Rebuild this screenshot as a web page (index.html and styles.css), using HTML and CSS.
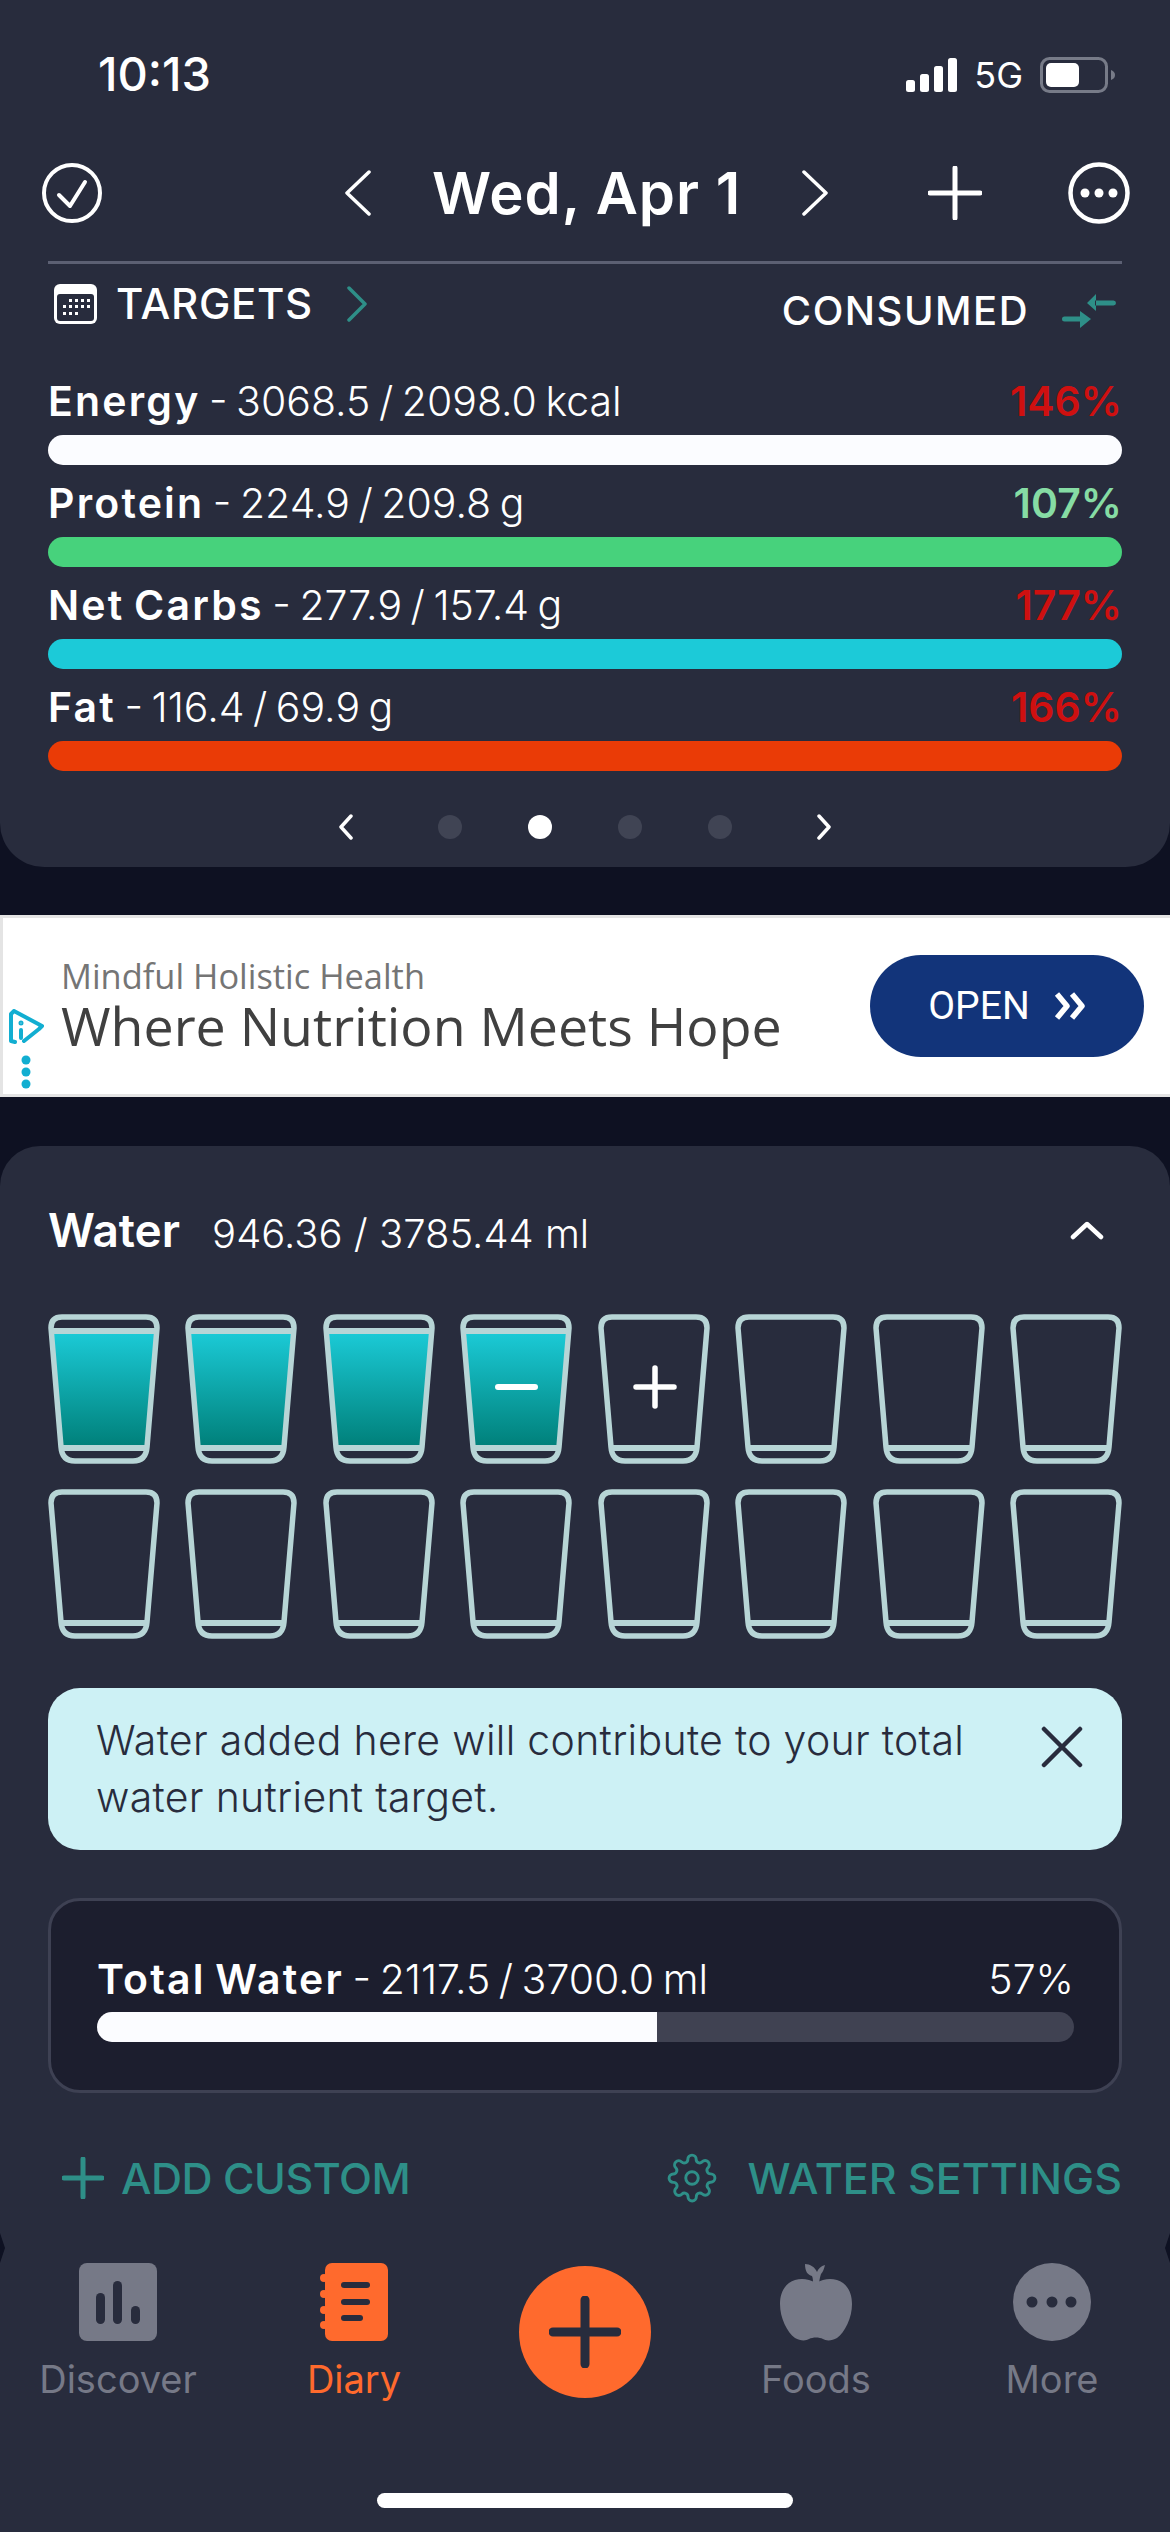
FILE: index.html
```html
<!DOCTYPE html>
<html lang="en">
<head>
    <meta charset="UTF-8">
    <meta name="viewport" content="width=device-width, initial-scale=1.0">
    <title>Diary - Water</title>
    <link rel="stylesheet" href="styles.css">
</head>
<body>
<div class="page">

    <section class="summary">
        <div class="status">
            <span class="time">10:13</span>
            <div class="status-right">
                <svg class="signal" width="51" height="34" viewBox="0 0 51 34" fill="#fff"><rect x="0" y="22" width="9" height="12" rx="2.5"/><rect x="14" y="16" width="9" height="18" rx="2.5"/><rect x="28" y="8" width="9" height="26" rx="2.5"/><rect x="42" y="0" width="9" height="34" rx="2.5"/></svg>
                <span class="net">5G</span>
                <svg class="battery" width="75" height="36" viewBox="0 0 75 36"><rect x="1.5" y="1.5" width="65" height="33" rx="8" fill="none" stroke="#777b88" stroke-width="3"/><rect x="6" y="6" width="33" height="24" rx="5" fill="#fff"/><path d="M71 13c3 1 4 3 4 5s-1 4-4 5z" fill="#777b88"/></svg>
            </div>
        </div>

        <div class="datebar">
            <svg class="ic-check" width="60" height="60" viewBox="0 0 60 60" fill="none" stroke="#fff" stroke-width="4" stroke-linecap="round" stroke-linejoin="round"><circle cx="30" cy="30" r="28"/><path d="M17 32l11 11 15-24"/></svg>
            <div class="datenav">
                <svg width="28" height="46" viewBox="0 0 28 46" fill="none" stroke="#fff" stroke-width="3.5" stroke-linecap="round" stroke-linejoin="round"><path d="M25 2L3 23l22 21"/></svg>
                <h1 class="date">Wed, Apr 1</h1>
                <svg width="28" height="46" viewBox="0 0 28 46" fill="none" stroke="#fff" stroke-width="3.5" stroke-linecap="round" stroke-linejoin="round"><path d="M3 2l22 21L3 44"/></svg>
            </div>
            <svg class="ic-plus" width="54" height="54" viewBox="0 0 54 54" fill="none" stroke="#fff" stroke-width="5" stroke-linecap="round"><path d="M27 2v50M2 27h50"/></svg>
            <svg class="ic-more" width="62" height="62" viewBox="0 0 62 62"><circle cx="31" cy="31" r="28.5" fill="none" stroke="#fff" stroke-width="4.5"/><circle cx="17" cy="31" r="4.5" fill="#fff"/><circle cx="31" cy="31" r="4.5" fill="#fff"/><circle cx="45" cy="31" r="4.5" fill="#fff"/></svg>
        </div>

        <div class="rule"></div>

        <div class="targets">
            <div class="targets-left">
                <svg width="43" height="40" viewBox="0 0 43 40"><rect width="43" height="40" rx="6" fill="#fff"/><rect x="3" y="10" width="37" height="27" rx="3" fill="#282c3d"/><g fill="#fff"><rect x="15" y="15" width="3" height="3"/><rect x="21" y="15" width="3" height="3"/><rect x="27" y="15" width="3" height="3"/><rect x="33" y="15" width="3" height="3"/><rect x="9" y="21" width="3" height="3"/><rect x="15" y="21" width="3" height="3"/><rect x="21" y="21" width="3" height="3"/><rect x="27" y="21" width="3" height="3"/><rect x="33" y="21" width="3" height="3"/><rect x="9" y="28" width="3" height="3"/><rect x="15" y="28" width="3" height="3"/><rect x="21" y="28" width="3" height="3"/></g></svg>
                <span>TARGETS</span>
                <svg class="teal-chev" width="22" height="36" viewBox="0 0 22 36" fill="none" stroke="#2e8f88" stroke-width="3.5" stroke-linecap="round" stroke-linejoin="round"><path d="M3 2l16 16L3 34"/></svg>
            </div>
            <div class="targets-right">
                <span>CONSUMED</span>
                <svg width="54" height="34" viewBox="0 0 54 34" fill="#2e8f88"><path d="M34 0L25 9l9 8zM0 25a2.500 2.500 0 0 1 2.500-2.500H20v5H2.500A2.500 2.500 0 0 1 0 25zM33 6.500h18.500a2.500 2.500 0 0 1 0 5H33zM18 17l11 8-11 9z"/></svg>
            </div>
        </div>

        <div class="macro">
            <div class="macro-head"><span><b>Energy</b> - 3068.5 / 2098.0 kcal</span><span class="pct over">146%</span></div>
            <div class="bar bar-white"></div>
        </div>
        <div class="macro">
            <div class="macro-head"><span><b>Protein</b> - 224.9 / 209.8 g</span><span class="pct ok">107%</span></div>
            <div class="bar bar-green"></div>
        </div>
        <div class="macro">
            <div class="macro-head"><span><b>Net Carbs</b> - 277.9 / 157.4 g</span><span class="pct over">177%</span></div>
            <div class="bar bar-cyan"></div>
        </div>
        <div class="macro">
            <div class="macro-head"><span><b>Fat</b> - 116.4 / 69.9 g</span><span class="pct over">166%</span></div>
            <div class="bar bar-red"></div>
        </div>

        <div class="pager">
            <svg width="16" height="26" viewBox="0 0 16 26" fill="none" stroke="#fff" stroke-width="3.5" stroke-linecap="round" stroke-linejoin="round"><path d="M13 2L3 13l10 11"/></svg>
            <div class="dots"><i></i><i class="on"></i><i></i><i></i></div>
            <svg width="16" height="26" viewBox="0 0 16 26" fill="none" stroke="#fff" stroke-width="3.5" stroke-linecap="round" stroke-linejoin="round"><path d="M3 2l10 11L3 24"/></svg>
        </div>
    </section>

    <section class="ad">
        <div class="ad-mark">
            <svg width="36" height="36" viewBox="0 0 36 36" fill="none" stroke="#12aed1" stroke-width="4" stroke-linecap="round" stroke-linejoin="round"><path d="M7 33L3 32V5l3-3 28 15-3 3-15 12"/><path d="M13 21v8"/><circle cx="13" cy="14" r="1" stroke-width="3"/></svg>
            <svg class="ad-dots" width="10" height="34" viewBox="0 0 10 34" fill="#12aed1"><circle cx="5" cy="5" r="4.500"/><circle cx="5" cy="17" r="4.500"/><circle cx="5" cy="29" r="4.500"/></svg>
        </div>
        <div class="ad-text">
            <div class="ad-small">Mindful Holistic Health</div>
            <div class="ad-big">Where Nutrition Meets Hope</div>
        </div>
        <div class="ad-btn">OPEN
            <svg width="32" height="28" viewBox="0 0 32 28" fill="none" stroke="#fff" stroke-width="5.500" stroke-linejoin="round"><path d="M3 2l10 12L3 26M18 2l10 12-10 12"/></svg>
        </div>
    </section>

    <section class="water">
        <div class="water-head">
            <span class="water-title">Water</span>
            <span class="water-amt">946.36 / 3785.44 ml</span>
            <svg class="water-up" width="34" height="20" viewBox="0 0 34 20" fill="none" stroke="#fff" stroke-width="4.500" stroke-linecap="round" stroke-linejoin="round"><path d="M3 17L17 4l14 13"/></svg>
        </div>

        <div class="cups" id="cups"></div>

        <div class="note">
            <p>Water added here will contribute to your total water nutrient target.</p>
            <svg width="42" height="42" viewBox="0 0 42 42" fill="none" stroke="#282c3d" stroke-width="4.500" stroke-linecap="round"><path d="M3 3l36 36M39 3L3 39"/></svg>
        </div>

        <div class="total">
            <div class="macro-head"><span><b>Total Water</b> - 2117.5 / 3700.0 ml</span><span class="pct">57%</span></div>
            <div class="bar bar-track"><div class="bar-fill" style="width:57.3%"></div></div>
        </div>

        <div class="actions">
            <div class="action">
                <svg width="42" height="42" viewBox="0 0 42 42" fill="none" stroke="#2e8f88" stroke-width="5" stroke-linecap="round"><path d="M21 2v38M2 21h38"/></svg>
                <span>ADD CUSTOM</span>
            </div>
            <div class="action">
                <svg width="50" height="50" viewBox="0 0 24 24" fill="none" stroke="#2e8f88" stroke-width="1.400" stroke-linecap="round" stroke-linejoin="round"><circle cx="12" cy="12" r="3"/><path d="M19.400 15a1.650 1.650 0 0 0 .33 1.820l.06.06a2 2 0 1 1-2.830 2.830l-.06-.06a1.650 1.650 0 0 0-1.820-.33 1.650 1.650 0 0 0-1 1.510V21a2 2 0 0 1-4 0v-.09A1.650 1.650 0 0 0 9 19.400a1.650 1.650 0 0 0-1.820.33l-.06.06a2 2 0 1 1-2.830-2.830l.06-.06a1.650 1.650 0 0 0 .33-1.820 1.650 1.650 0 0 0-1.510-1H3a2 2 0 0 1 0-4h.09A1.650 1.650 0 0 0 4.600 9a1.650 1.650 0 0 0-.33-1.820l-.06-.06a2 2 0 1 1 2.830-2.830l.06.06a1.650 1.650 0 0 0 1.820.33H9a1.650 1.650 0 0 0 1-1.510V3a2 2 0 0 1 4 0v.09a1.650 1.650 0 0 0 1 1.510 1.650 1.650 0 0 0 1.820-.33l.06-.06a2 2 0 1 1 2.830 2.830l-.06.06a1.650 1.650 0 0 0-.33 1.820V9a1.650 1.650 0 0 0 1.510 1H21a2 2 0 0 1 0 4h-.09a1.650 1.650 0 0 0-1.510 1z"/></svg>
                <span>WATER SETTINGS</span>
            </div>
        </div>
    </section>

    <nav class="tabs">
        <div class="tab">
            <svg width="78" height="78" viewBox="0 0 78 78"><rect width="78" height="78" rx="8" fill="#767987"/><g fill="#282c3d"><rect x="17" y="30" width="9" height="31" rx="4.500"/><rect x="34" y="18" width="9" height="43" rx="4.500"/><rect x="52" y="43" width="9" height="18" rx="4.500"/></g></svg>
            <span>Discover</span>
        </div>
        <div class="tab tab-on">
            <svg width="68" height="78" viewBox="0 0 68 78"><rect x="5" width="63" height="78" rx="7" fill="#ff6a2d"/><g fill="#ff6a2d"><circle cx="4" cy="15" r="4"/><circle cx="4" cy="31" r="4"/><circle cx="4" cy="47" r="4"/><circle cx="4" cy="62" r="4"/></g><g fill="#282c3d"><rect x="21" y="19" width="29" height="6" rx="3"/><rect x="21" y="36" width="29" height="6" rx="3"/><rect x="21" y="52" width="22" height="6" rx="3"/></g></svg>
            <span>Diary</span>
        </div>
        <div class="fab">
            <svg width="72" height="72" viewBox="0 0 72 72" fill="none" stroke="#282c3d" stroke-width="9" stroke-linecap="round"><path d="M36 4v64M4 36h64"/></svg>
        </div>
        <div class="tab">
            <svg width="72" height="78" viewBox="0 0 72 78"><path fill="#767987" d="M36 20c7-4 14-5 21-3 9 3 15 11 15 24 0 14-7 28-15 34-5 3-11 3-14 1-4-2-10-2-14 0-3 2-9 2-14-1C7 69 0 55 0 41c0-13 6-21 15-24 7-2 14-1 21 3z"/><path fill="#767987" d="M33 22c0-4 0-7-1-9-4-1-7-4-7-12 5 0 10 3 12 8 1-3 4-6 8-7-1 4-2 7-4 9-1 3-2 7-2 11z"/></svg>
            <span>Foods</span>
        </div>
        <div class="tab">
            <svg width="78" height="78" viewBox="0 0 78 78"><circle cx="39" cy="39" r="39" fill="#767987"/><g fill="#282c3d"><circle cx="19" cy="39" r="5.500"/><circle cx="39" cy="39" r="5.500"/><circle cx="58" cy="39" r="5.500"/></g></svg>
            <span>More</span>
        </div>
    </nav>

    <div class="home-wrap"><div class="home"></div></div>
</div>

<script>
    // 16 glasses, first 4 filled
    const cups = document.getElementById("cups");
    const line = "#b7d5d6";
    for (let i = 0; i < 16; i++) {
        const full = i < 4;
        let mark = "";
        if (i === 3) mark = '<path d="M38 73h37" stroke="#fff" stroke-width="6" stroke-linecap="round"/>';
        if (i === 4) mark = '<path d="M38 73h38M57 54v38" stroke="#fff" stroke-width="5.5" stroke-linecap="round"/>';
        const water = full ? '<path d="M5 19h102l-7 113H12z" fill="url(#w' + i + ')"/>' : "";
        const top = full ? '<path d="M4 17h104" stroke="' + line + '" stroke-width="6"/>' : "";
        cups.innerHTML += '<svg class="cup" width="112" height="150" viewBox="0 0 112 150" fill="none">' +
            '<defs><linearGradient id="w' + i + '" x1="0" y1="0" x2="0" y2="1"><stop offset="0" stop-color="#1bcad6"/><stop offset="1" stop-color="#00807a"/></linearGradient></defs>' +
            water + top +
            '<path d="M14 3h84q11 0 11 11l-10 119q-1 14-14 14H27q-13 0-14-14L3 14Q3 3 14 3z" stroke="' + line + '" stroke-width="5.5"/>' +
            '<path d="M13 134h86" stroke="' + line + '" stroke-width="6"/>' + mark + '</svg>';
    }
</script>
</body>
</html>
```

FILE: styles.css
```css
* {
    box-sizing: border-box;
}

body {
    margin: 0;
    background: #0e1122;
    color: #fff;
    font-family: "Inter", "Liberation Sans", sans-serif;
}

.page {
    width: 1170px;
    height: 2532px;
    overflow: hidden;
}

/* top card */
.summary {
    height: 867px;
    padding: 0 48px;
    background: #282c3d;
    border-radius: 0 0 44px 44px;
}

.status {
    height: 146px;
    padding: 57px 0 0 50px;
    display: flex;
    justify-content: space-between;
    align-items: flex-start;
}

.time {
    font-size: 47px;
    font-weight: 500;
    line-height: 34px;
}

.status-right {
    display: flex;
    align-items: center;
    gap: 17px;
    margin-right: 7px;
}

.net {
    font-size: 36px;
    font-weight: 400;
    line-height: 34px;
}

.datebar {
    height: 94px;
    display: flex;
    align-items: center;
    margin: 0 -6px;
}

.datebar svg {
    flex: none;
}

.datenav {
    display: flex;
    flex: none;
    align-items: center;
    gap: 60px;
    margin-left: 242px;
}

.date {
    margin: 0;
    font-size: 58px;
    font-weight: 600;
    letter-spacing: 1px;
    white-space: nowrap;
}

.ic-plus {
    margin-left: 99px;
}

.ic-more {
    margin-left: 86px;
}

.rule {
    height: 3px;
    margin-top: 21px;
    background: #5c6073;
}

.targets {
    height: 99px;
    padding-top: 20px;
    display: flex;
    justify-content: space-between;
    align-items: flex-start;
    font-weight: 500;
    line-height: 40px;
}

.targets-left {
    display: flex;
    align-items: center;
    gap: 19px;
    margin-left: 6px;
    font-size: 42px;
    letter-spacing: .7px;
}

.teal-chev {
    margin-left: 14px;
}

.targets-right {
    display: flex;
    align-items: center;
    gap: 33px;
    margin: 7px 6px 0 0;
    font-size: 40px;
    letter-spacing: 1.5px;
}

.macro {
    height: 102px;
}

.macro-head {
    display: flex;
    justify-content: space-between;
    align-items: flex-end;
    height: 72px;
    padding-bottom: 4px;
    font-size: 41px;
    font-weight: 300;
    line-height: 60px;
    word-spacing: -3px;
}

.macro-head b {
    font-weight: 600;
    letter-spacing: 2.2px;
}

.pct {
    font-weight: 300;
}

.pct.over {
    color: #cf1010;
    font-weight: 600;
}

.pct.ok {
    color: #86dca4;
    font-weight: 600;
}

.bar {
    height: 30px;
    border-radius: 15px;
}

.bar-white {
    background: #fbfcff;
}

.bar-green {
    background: #47d27c;
}

.bar-cyan {
    background: #1ccad8;
}

.bar-red {
    background: #ea3b06;
}

.pager {
    display: flex;
    justify-content: center;
    align-items: center;
    gap: 84px;
    margin-top: 43px;
}

.dots {
    display: flex;
    gap: 66px;
}

.dots i {
    width: 24px;
    height: 24px;
    border-radius: 50%;
    background: #404454;
}

.dots i.on {
    background: #fff;
}

/* ad */
.ad {
    height: 182px;
    margin-top: 48px;
    background: #fff;
    border: 3px solid #e4e4e4;
    border-width: 3px 0 3px 3px;
    display: flex;
    align-items: center;
}

.ad-mark {
    width: 58px;
    padding-left: 5px;
    display: flex;
    flex-direction: column;
    align-items: flex-start;
    gap: 10px;
    margin-top: 86px;
    flex: none;
}

.ad-dots {
    margin-left: 13px;
}

.ad-text {
    flex: 1;
    font-family: "Open Sans", sans-serif;
}

.ad-small {
    font-size: 34.400px;
    color: #757575;
    line-height: 40px;
}

.ad-big {
    font-size: 53.700px;
    color: #404040;
    line-height: 60px;
}

.ad-btn {
    width: 274px;
    height: 102px;
    margin-right: 26px;
    border-radius: 51px;
    background: #12347a;
    color: #fff;
    font-family: "Roboto", sans-serif;
    font-size: 39px;
    display: flex;
    justify-content: center;
    align-items: center;
    gap: 24px;
}

/* water card */
.water {
    height: 1082px;
    margin-top: 49px;
    padding: 0 48px;
    background: #282c3d;
    border-radius: 40px 40px 0 0;
}

.water-head {
    height: 168px;
    display: flex;
    align-items: center;
}

.water-title {
    font-size: 46px;
    font-weight: 600;
}

.water-amt {
    margin-left: 32px;
    font-size: 40px;
    font-weight: 300;
    margin-top: 6px;
}

.water-up {
    margin-left: auto;
    margin-right: 18px;
}

.cups {
    display: grid;
    grid-template-columns: repeat(8, 112px);
    justify-content: space-between;
    row-gap: 25px;
}

.cup {
    display: block;
}

.note {
    height: 162px;
    margin-top: 49px;
    padding: 0 39px 0 48px;
    background: #cdf1f5;
    border-radius: 32px;
    display: flex;
    align-items: center;
    justify-content: space-between;
    color: #282c3d;
    font-size: 41px;
    font-weight: 300;
    line-height: 57px;
    letter-spacing: .3px;
}

.note p {
    margin: 0;
    width: 900px;
}

.note svg {
    margin-top: -44px;
}

.total {
    height: 195px;
    margin-top: 48px;
    padding: 40px 45px 0 46px;
    background: #1c1e2e;
    border: 3px solid #3e4153;
    border-radius: 32px;
}

.bar-track {
    background: #404252;
    overflow: hidden;
    margin-top: -1px;
}

.bar-fill {
    height: 100%;
    background: #fbfcff;
}

.actions {
    display: flex;
    justify-content: space-between;
    align-items: center;
    height: 72px;
    margin-top: 49px;
    padding-left: 14px;
    color: #2e8f88;
    font-size: 43px;
    font-weight: 500;
}

.action {
    display: flex;
    align-items: center;
    gap: 17px;
}

.action:first-child span {
    letter-spacing: -.5px;
}

.action:last-child {
    gap: 30px;
}

/* bottom tabs */
.tabs {
    height: 198px;
    margin-top: -1px;
    background: #282c3d;
    display: grid;
    grid-template-columns: 236px 236px 226px 236px 236px;
    align-items: start;
    position: relative;
}

/* dark slivers where the bar's top corners meet the card */
.tabs::before,
.tabs::after {
    content: "";
    position: absolute;
    top: 6px;
    width: 5px;
    height: 30px;
    background: #0e1122;
}

.tabs::before {
    left: 0;
    clip-path: polygon(0 0, 100% 50%, 0 100%);
}

.tabs::after {
    right: 0;
    clip-path: polygon(100% 0, 0 50%, 100% 100%);
}

.tab {
    padding-top: 36px;
    display: flex;
    flex-direction: column;
    align-items: center;
    gap: 15px;
    color: #767987;
    font-size: 38px;
    font-weight: 400;
}

.tab-on {
    color: #ff6a2d;
}

.fab {
    width: 132px;
    height: 132px;
    margin: 39px auto 0;
    background: #ff6a2d;
    border-radius: 50%;
    display: flex;
    justify-content: center;
    align-items: center;
}

.home-wrap {
    height: 107px;
    padding-top: 68px;
    background: #282c3d;
}

.home {
    width: 416px;
    height: 15px;
    margin: 0 auto;
    background: #fff;
    border-radius: 8px;
}
```
